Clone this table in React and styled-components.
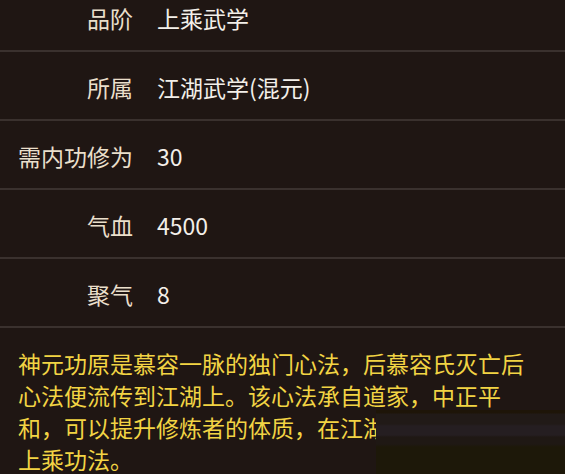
import React from 'react'
import styled, { createGlobalStyle } from 'styled-components'

const GlobalStyle = createGlobalStyle`
  html, body {
    margin: 0;
    padding: 0;
    background: #1f1613;
  }
  body {
    font-family: "Noto Sans CJK SC", "Noto Sans", sans-serif;
  }
`

const Page = styled('div')`
  position: relative;
  width: 565px;
  height: 474px;
  overflow: hidden;
  background: #1f1613;
`

const StatList = styled('div')`
  display: flex;
  flex-direction: column;
  margin-top: -17px;
`

const StatRow = styled('div')`
  display: grid;
  grid-template-columns: 133px 1fr;
  column-gap: 24px;
  align-items: center;
  height: 69px;
  padding-top: 3px;
  box-sizing: border-box;
  border-bottom: 2px solid #3a312e;
`

const Label = styled('div')`
  text-align: right;
  font-size: 23px;
  color: #eadfcb;
  white-space: nowrap;
`

const Value = styled('div')`
  font-size: 23px;
  color: #f3efe9;
`

const Description = styled('p')`
  margin: 0;
  width: 515px;
  padding: 19px 0 0 18px;
  font-size: 23px;
  line-height: 32px;
  color: #f2d444;
`

// the blurred patch that covers the end of the description
const Obscured = styled('div')`
  position: absolute;
  left: 376px;
  top: 410px;
  right: 0;
  bottom: 0;
  background: linear-gradient(
    to bottom,
    #1e1508 0px,
    #1e1508 3px,
    #211a17 4px,
    #211a17 14px,
    #251e21 16px,
    #251e21 25px,
    #1f1814 27px,
    #1f1814 34px,
    #1d1809 37px,
    #1d1809 100%
  );
`

const stats = [
  { label: '品阶', value: '上乘武学' },
  { label: '所属', value: '江湖武学(混元)' },
  { label: '需内功修为', value: '30' },
  { label: '气血', value: '4500' },
  { label: '聚气', value: '8' },
]

export default function App() {
  return (
    <Page>
      <GlobalStyle />
      <StatList>
        {stats.map(s => (
          <StatRow key={s.label}>
            <Label>{s.label}</Label>
            <Value>{s.value}</Value>
          </StatRow>
        ))}
      </StatList>
      <Description>
        神元功原是慕容一脉的独门心法，后慕容氏灭亡后心法便流传到江湖上。该心法承自道家，中正平和，可以提升修炼者的体质，在江湖中也算得上是上乘功法。
      </Description>
      <Obscured />
    </Page>
  )
}
